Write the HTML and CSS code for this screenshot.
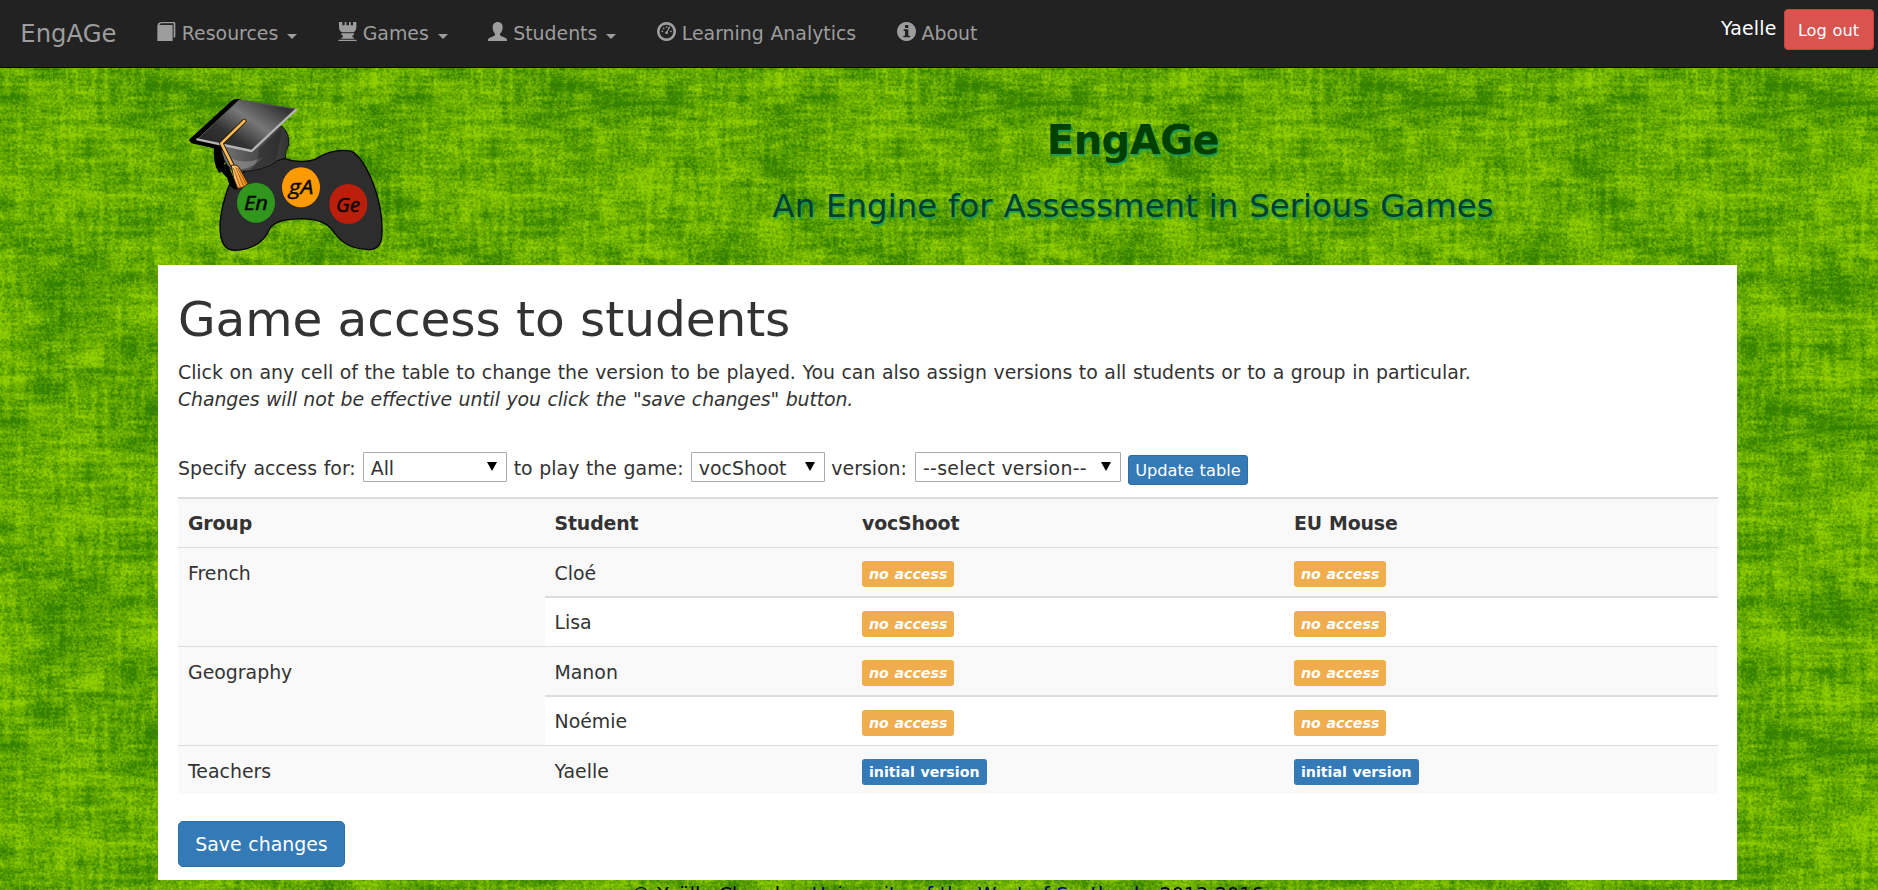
FILE: index.html
```
<!DOCTYPE html>
<html lang="en">
<head>
<meta charset="utf-8">
<title>EngAGe - Game access</title>
<link rel="stylesheet" href="styles.css">
</head>
<body>
<nav class="navbar">
  <a class="brand">EngAGe</a>
  <a class="nav-link">
    <svg class="icon" viewBox="0 0 57 57"><path d="M1 14v43h46V9H7q1-5 7-5h36v44l5-3V4q0-4-4-4H13Q1 1 1 14z"/></svg>
    <span>Resources</span><i class="caret"></i>
  </a>
  <a class="nav-link">
    <svg class="icon" viewBox="0 0 57 57"><path d="M3 0h10v10h7V0h5v10h8V0h5v10h7V0h10v15q0 8-3 11l-5 5H11l-5-5q-3-3-3-11zM10 34h38v4l-5 3v4l5 2v3H10v-3l5-2v-4l-5-3zM3 53h51l3 4H0z"/></svg>
    <span>Games</span><i class="caret"></i>
  </a>
  <a class="nav-link">
    <svg class="icon" viewBox="0 0 57 57"><path d="M29 0c10 0 15 7 15 16 0 8-3 15-8 19v4c3 4 10 6 17 9 4 2 4 5 4 9H0c0-4 0-7 4-9 7-3 14-5 17-9v-4c-4-4-7-11-7-19C14 7 19 0 29 0z"/></svg>
    <span>Students</span><i class="caret"></i>
  </a>
  <a class="nav-link">
    <svg class="icon" viewBox="0 0 57 57"><path fill-rule="evenodd" d="M28.500 0a28.500 28.500 0 1 0 .1 0zM28.500 8a20.500 20.500 0 1 1-.1 0z"/><circle cx="16" cy="28" r="2.600"/><circle cx="20" cy="19" r="2.600"/><circle cx="29" cy="15" r="2.600"/><circle cx="42" cy="28" r="2.600"/><path d="M36 13l4 2-8 14q3 7-4 7-6-1-3-6l5-3z"/></svg>
    <span>Learning Analytics</span>
  </a>
  <a class="nav-link">
    <svg class="icon" viewBox="0 0 57 57"><path fill-rule="evenodd" d="M28.500 0a28.500 28.500 0 1 0 .1 0zM24 9h10v9H24zM20 22h14v19h5v5H19v-5h5V27h-4z"/></svg>
    <span>About</span>
  </a>
  <div class="account">
    <span class="user">Yaelle</span>
    <button class="btn logout">Log out</button>
  </div>
</nav>

<header class="banner">
  <svg class="logo" viewBox="0 0 720 570">
    <defs>
      <linearGradient id="board" x1="0" y1="0.900" x2="0.900" y2="0.200"><stop offset="0" stop-color="#222"/><stop offset=".35" stop-color="#333"/><stop offset=".65" stop-color="#777"/><stop offset="1" stop-color="#333"/></linearGradient>
      <linearGradient id="skull" x1="0" y1="0" x2="1" y2="0"><stop offset="0" stop-color="#777"/><stop offset=".4" stop-color="#555"/><stop offset="1" stop-color="#333"/></linearGradient>
      <linearGradient id="tassel" x1="0" y1="0" x2="1" y2="0"><stop offset="0" stop-color="#ffd58a"/><stop offset="1" stop-color="#ef7d00"/></linearGradient>
    </defs>
    <path d="M150 440C150 400 165 345 180 310C200 280 250 255 345 236C370 246 410 248 435 238C460 222 500 205 545 214C590 240 640 360 636 460C636 500 615 512 590 508C530 506 505 475 490 455C470 425 440 418 395 416C340 418 310 425 297 450C280 490 240 510 195 511C160 511 150 480 150 440Z" fill="#2d2d2d" stroke="#050505" stroke-width="4"/>
    <path d="M56 180L185 62Q195 54 212 58L190 190L150 280Q130 262 132 205L65 190Z" fill="#000"/>
    <path d="M142 262L172 250L205 328Q180 332 172 295Z" fill="#000"/>
    <path d="M152 190L335 138Q360 160 356 195Q345 212 346 234Q320 238 300 256Q240 282 185 270Q155 245 152 190Z" fill="url(#skull)" stroke="#111" stroke-width="3"/>
    <path d="M165 225Q215 260 280 232Q240 275 190 266Z" fill="#999" opacity=".55"/>
    <path d="M265 208Q270 250 235 272Q290 265 320 235L335 145Z" fill="#222" opacity=".45"/>
    <path d="M82 178L207 60L379 87L245 214Z" fill="url(#board)" stroke="#555" stroke-width="3"/>
    <path d="M82 178L245 213L378 89" fill="none" stroke="#b4b4b4" stroke-width="7" stroke-linejoin="round" stroke-linecap="round"/>
    <path d="M223 123L154 190L190 262" fill="none" stroke="#241500" stroke-width="13" stroke-linejoin="round" stroke-linecap="round"/>
    <path d="M223 123L154 190L190 262" fill="none" stroke="#f8bb55" stroke-width="8" stroke-linejoin="round" stroke-linecap="round"/>
    <path d="M184 256Q202 252 208 264L234 310Q225 324 203 325Q188 295 184 256Z" fill="url(#tassel)" stroke="#402000" stroke-width="3"/>
    <path d="M190 264L211 322M197 262L221 319M203 264L229 314" stroke="#7c3d00" stroke-width="2"/>
    <ellipse cx="258" cy="368" rx="57" ry="60" fill="#31961d"/>
    <ellipse cx="393" cy="322" rx="57" ry="60" fill="#ff9a00"/>
    <ellipse cx="535" cy="372" rx="57" ry="60" fill="#bb1f0c"/>
    <text class="logo-text" x="222" y="389" textLength="72" lengthAdjust="spacingAndGlyphs">En</text>
    <text class="logo-text" x="356" y="342" textLength="74" lengthAdjust="spacingAndGlyphs">gA</text>
    <text class="logo-text" x="498" y="395" textLength="72" lengthAdjust="spacingAndGlyphs">Ge</text>
  </svg>
  <div class="titles">
    <div class="site-title">EngAGe</div>
    <div class="site-subtitle">An Engine for Assessment in Serious Games</div>
  </div>
</header>

<main class="panel">
  <h1>Game access to students</h1>
  <p>Click on any cell of the table to change the version to be played. You can also assign versions to all students or to a group in particular.<br><em>Changes will not be effective until you click the "save changes" button.</em></p>
  <div class="controls">
    <label>Specify access for:</label>
    <select class="who"><option>All</option></select>
    <label>to play the game:</label>
    <select class="game"><option>vocShoot</option></select>
    <label>version:</label>
    <select class="version"><option>--select version--</option></select>
    <button class="btn update">Update table</button>
  </div>
  <table>
    <colgroup><col class="c-group"><col class="c-student"><col class="c-game"><col></colgroup>
    <tr class="head"><th>Group</th><th>Student</th><th>vocShoot</th><th>EU Mouse</th></tr>
    <tr class="first"><td rowspan="2">French</td><td>Cloé</td><td><span class="badge none">no access</span></td><td><span class="badge none">no access</span></td></tr>
    <tr class="second"><td>Lisa</td><td><span class="badge none">no access</span></td><td><span class="badge none">no access</span></td></tr>
    <tr class="first"><td rowspan="2">Geography</td><td>Manon</td><td><span class="badge none">no access</span></td><td><span class="badge none">no access</span></td></tr>
    <tr class="second"><td>Noémie</td><td><span class="badge none">no access</span></td><td><span class="badge none">no access</span></td></tr>
    <tr class="first"><td>Teachers</td><td>Yaelle</td><td><span class="badge initial">initial version</span></td><td><span class="badge initial">initial version</span></td></tr>
  </table>
  <button class="btn save">Save changes</button>
</main>
<footer>© Yaëlle Chaudy - <a>University of the West of Scotland</a> - 2013-2016</footer>
</body>
</html>
```

FILE: styles.css
```
* { box-sizing: border-box; }
html { height: 100%; overflow: hidden; }
body {
  margin: 0;
  height: 890px;
  overflow: hidden;
  font-family: "DejaVu Sans", Verdana, sans-serif;
  font-size: 18.9px;
  line-height: 27px;
  word-spacing: .034em;
  color: #333;
  background: #6cab00 url("data:image/svg+xml,%3Csvg xmlns='http://www.w3.org/2000/svg' width='405' height='324'%3E%3Cfilter id='f' x='0' y='0' width='100%25' height='100%25' color-interpolation-filters='sRGB'%3E%3CfeTurbulence type='fractalNoise' baseFrequency='.013 .022' numOctaves='6' seed='23' stitchTiles='stitch'/%3E%3CfeColorMatrix values='1 0 0 0 0 1 0 0 0 0 1 0 0 0 0 0 0 0 0 1' result='a'/%3E%3CfeTurbulence type='fractalNoise' baseFrequency='.025 .16' numOctaves='4' seed='9' stitchTiles='stitch'/%3E%3CfeColorMatrix values='1 0 0 0 0 1 0 0 0 0 1 0 0 0 0 0 0 0 0 1' result='b'/%3E%3CfeTurbulence type='fractalNoise' baseFrequency='.16 .025' numOctaves='4' seed='5' stitchTiles='stitch'/%3E%3CfeColorMatrix values='1 0 0 0 0 1 0 0 0 0 1 0 0 0 0 0 0 0 0 1' result='c'/%3E%3CfeTurbulence type='fractalNoise' baseFrequency='.38' numOctaves='2' seed='7' stitchTiles='stitch'/%3E%3CfeColorMatrix values='1 0 0 0 0 1 0 0 0 0 1 0 0 0 0 0 0 0 0 1' result='d'/%3E%3CfeComposite in='a' in2='b' operator='arithmetic' k2='.55' k3='.45' result='e'/%3E%3CfeComposite in='c' in2='d' operator='arithmetic' k2='.4' k3='.6' result='g'/%3E%3CfeComposite in='e' in2='g' operator='arithmetic' k2='.52' k3='.48'/%3E%3CfeComponentTransfer%3E%3CfeFuncR type='linear' slope='4' intercept='-1.5'/%3E%3CfeFuncG type='linear' slope='4' intercept='-1.5'/%3E%3CfeFuncB type='linear' slope='4' intercept='-1.5'/%3E%3C/feComponentTransfer%3E%3CfeComponentTransfer%3E%3CfeFuncR type='table' tableValues='.21 .57'/%3E%3CfeFuncG type='table' tableValues='.51 .81'/%3E%3CfeFuncB type='table' tableValues='0 0'/%3E%3C/feComponentTransfer%3E%3C/filter%3E%3Crect width='405' height='324' filter='url(%23f)'/%3E%3C/svg%3E") 29px 76px;
}

/* Top navigation */
.navbar {
  display: flex;
  height: 68px;
  background: #222;
  border-bottom: 1px solid #080808;
  color: #9d9d9d;
  line-height: 67px;
}
.brand { padding: 0 20.200px 0 20.300px; font-size: 24.300px; }
.nav-link { display: flex; align-items: center; padding: 0 20.200px; white-space: nowrap; }
.icon { width: 19px; height: 19px; margin: -4px 6px 0 0; fill: currentColor; }
.caret { margin: 5px 0 0 9px; border: 5px solid transparent; border-top-color: currentColor; border-bottom: 0; }
.account { display: flex; margin-left: auto; padding: 9px 4.500px 0 0; gap: 7px; }
.user { color: #fff; line-height: 39px; letter-spacing: .2px; }

.btn {
  display: block;
  border: 1px solid #2e6da4;
  border-radius: 4px;
  background: #337ab7;
  color: #fff;
  font-family: inherit;
  font-size: 16.200px;
  word-spacing: inherit;
  text-align: center;
  padding: 0;
}
.logout { width: 90px; height: 41px; padding-top: 3px; line-height: 36px; background: #d9534f; border-color: #d43f3a; }

/* Banner with logo */
.banner { display: flex; width: 1579px; height: 196.500px; margin-left: 158px; padding-right: 20px; }
.logo { width: 240px; height: 190px; margin: 12px 139px 0 12px; flex: none; }
.logo-text { font: italic 500 58px "Open Sans", sans-serif; fill: #0a0a0a; stroke: #0a0a0a; stroke-width: 1.500px; }
.titles { flex: 1; text-align: center; white-space: nowrap; text-shadow: 1px 2px 2px #109a5a; }
.site-title { margin-top: 47px; line-height: 50px; font-size: 40px; font-weight: bold; letter-spacing: -.5px; color: #004000; }
.site-subtitle { margin-top: 21px; line-height: 40px; font-size: 32.400px; color: #004030; }

/* Content */
.panel { width: 1579px; height: 615px; margin-left: 158px; padding: 28.500px 19px 0 20px; background: #fff; }
h1 { margin: 0 0 13px; font-size: 48.600px; line-height: 53px; font-weight: normal; word-spacing: 0; letter-spacing: -.1px; }
p { margin: 0; letter-spacing: -.035px; }
em { letter-spacing: -.1px; }
.controls { display: flex; height: 45px; margin-top: 39px; white-space: nowrap; }
label { line-height: 33px; }
select {
  appearance: none;
  height: 30px;
  padding: 2px 0 0 7px;
  border: 1px solid #a9a9a9;
  border-radius: 1px;
  color: #333;
  font: 18.900px/27px "DejaVu Sans", Verdana, sans-serif;
  background: #fff url("data:image/svg+xml,%3Csvg xmlns='http://www.w3.org/2000/svg' width='10' height='9'%3E%3Cpath d='M0 0h10L5 9z'/%3E%3C/svg%3E") no-repeat right 9px top 9px;
}
.who { width: 144px; margin: 0 7px; }
.game { width: 134px; margin: 0 6.500px 0 7.300px; }
.version { width: 206px; margin: 0 7px 0 8px; letter-spacing: .3px; }
.update { width: 120px; height: 30px; margin-top: 3px; padding-top: 1px; line-height: 28px; border-radius: 3px; }

table { width: 1540px; table-layout: fixed; border-collapse: separate; border-spacing: 0; }
.c-group { width: 366.500px; }
.c-student { width: 307.500px; }
.c-game { width: 432px; }
th, td { padding: 0 11px 0 10px; vertical-align: top; text-align: left; line-height: 48px; background: #f9f9f9; }
th { height: 50px; border-top: 2px solid #ddd; letter-spacing: -.15px; }
.first td { height: 49px; padding-top: 2px; line-height: 46px; border-top: 1px solid #ddd; }
.second td { height: 50px; border-top: 2px solid #ddd; background: #fff; }
.badge { display: block; width: fit-content; height: 26px; margin-top: 13px; padding: 0 7px; border-radius: 3px; color: #fff; font-size: 14.200px; line-height: 27px; font-weight: bold; }
.first .badge { margin-top: 11px; }
.none { background: #f0ad4e; font-style: italic; }
.initial { background: #337ab7; }
.save { width: 167px; height: 46px; margin-top: 27px; font-size: 18.900px; line-height: 44px; border-radius: 5px; }

footer { width: 1579px; margin: 1px 0 0 158px; text-align: center; color: #000; letter-spacing: .09px; }
footer a { color: #00008b; }
```
